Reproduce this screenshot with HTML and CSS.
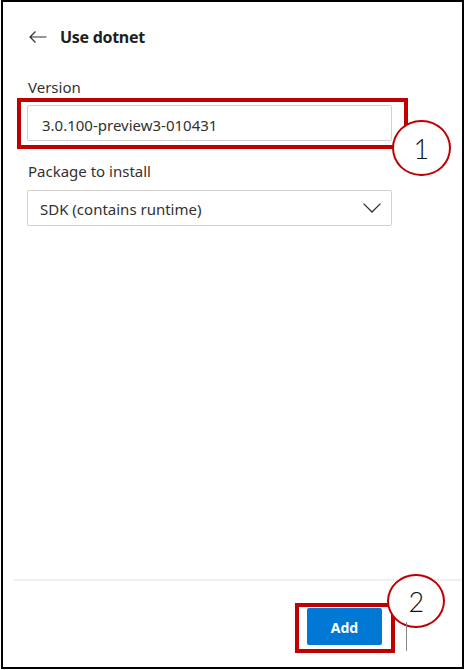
FILE: index.html
```html
<!DOCTYPE html>
<html>
<head>
<meta charset="utf-8">
<link rel="stylesheet" href="styles.css">
</head>
<body>
<div class="frame">
  <div class="panel">
    <div class="header">
      <svg class="back" width="18" height="12" viewBox="0 0 18 12"><path d="M17.5 6H1M6.5 0.5L1 6l5.5 5.5" fill="none" stroke="#323130" stroke-width="1.2"/></svg>
      <span class="title">Use dotnet</span>
    </div>
    <div class="label label-version">Version</div>
    <div class="field field-input">3.0.100-preview3-010431</div>
    <div class="label label-package">Package to install</div>
    <div class="field field-select">
      <span>SDK (contains runtime)</span>
      <svg class="chevron" width="18" height="10" viewBox="0 0 18 10"><path d="M0.6 0.6L9 9L17.4 0.6" fill="none" stroke="#323130" stroke-width="1.3"/></svg>
    </div>
  </div>
  <div class="separator"></div>
  <div class="footer">
    <button class="add">Add</button>
  </div>
  <div class="callout-box box-1"></div>
  <div class="callout-circle circle-1">1</div>
  <div class="callout-box box-2"></div>
  <div class="callout-circle circle-2">2</div>
  <div class="gray-line"></div>
</div>
</body>
</html>
```
FILE: styles.css
```css
html, body {
  margin: 0;
  padding: 0;
  background: #fff;
}
body {
  font-family: "Noto Sans", "Open Sans", sans-serif;
  color: #323130;
}
.frame {
  position: relative;
  margin-left: 1px;
  width: 463px;
  height: 669px;
  border: 2px solid #000;
  box-sizing: border-box;
  display: flex;
  flex-direction: column;
}
.panel {
  flex: 1;
  padding-left: 24px;
  display: flex;
  flex-direction: column;
  align-items: flex-start;
}
.header {
  margin-top: 22px;
  height: 26px;
  display: flex;
  align-items: center;
  padding-left: 2px;
}
.back {
  display: block;
}
.title {
  margin-left: 13px;
  font-size: 16px;
  font-weight: 700;
  letter-spacing: -0.3px;
  line-height: 26px;
  color: #201f1e;
}
.label {
  font-size: 15px;
  line-height: 20px;
  padding-left: 1px;
}
.label-version {
  margin-top: 26.5px;
  margin-bottom: 8.5px;
}
.label-package {
  margin-top: 20px;
  margin-bottom: 9px;
}
.field {
  width: 365px;
  height: 36px;
  box-sizing: border-box;
  border: 1px solid #d2d0ce;
  border-radius: 2px;
  font-size: 15px;
  line-height: 20px;
}
.field-input {
  padding: 9px 0 0 14px;
  color: #323130;
}
.field-select {
  padding: 8px 0 0 12px;
  display: flex;
  justify-content: space-between;
  align-items: flex-start;
}
.chevron {
  margin-top: 4px;
  margin-right: 10px;
}
.separator {
  height: 2px;
  margin-left: 11px;
  background: #f0f0f0;
}
.footer {
  height: 86px;
  box-sizing: border-box;
  padding: 27px 80px 0 0;
  display: flex;
  justify-content: flex-end;
  align-items: flex-start;
}
.add {
  width: 75px;
  height: 37px;
  border: none;
  border-radius: 2px;
  background: #0078d4;
  color: #fff;
  font-family: "Noto Sans", "Open Sans", sans-serif;
  font-size: 14px;
  font-weight: 700;
  padding: 2px 0 0 0;
  line-height: 20px;
}
.callout-box {
  position: absolute;
  box-sizing: border-box;
  border: 4.5px solid #c00000;
}
.box-1 {
  left: 14px;
  top: 95.5px;
  width: 390.5px;
  height: 51px;
}
.box-2 {
  left: 291.5px;
  top: 600.8px;
  width: 100.5px;
  height: 50.5px;
}
.callout-circle {
  position: absolute;
  box-sizing: border-box;
  border: 2px solid #c00000;
  border-radius: 50%;
  background: #fff;
  display: flex;
  align-items: center;
  justify-content: center;
  font-family: Lato, "DejaVu Sans", sans-serif;
  font-weight: 300;
  font-size: 27px;
  color: #111;
}
.circle-1 {
  left: 389px;
  top: 117.5px;
  width: 58.5px;
  height: 56.5px;
  padding-top: 2px;
}
.circle-2 {
  left: 384.3px;
  top: 571.7px;
  width: 58.2px;
  height: 54.6px;
  padding-top: 2px;
}
.gray-line {
  position: absolute;
  left: 403px;
  top: 620px;
  width: 1px;
  height: 29px;
  background: #8a8886;
}
```
